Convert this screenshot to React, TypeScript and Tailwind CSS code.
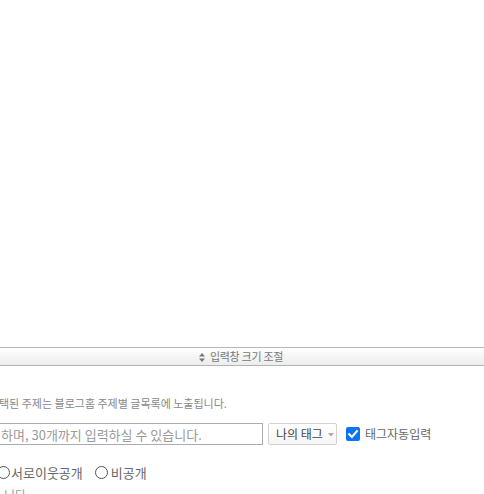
import React from "react";

const KR = { fontFamily: '"Noto Sans CJK KR", "Noto Sans", sans-serif' };

function Radio() {
  return <span className="inline-block w-[13px] h-[13px] rounded-full border border-[#555] bg-white shrink-0" />;
}

export default function App() {
  return (
    <div className="w-[484px] h-[494px] overflow-hidden bg-white relative" style={KR}>
      <div className="h-[347px]" />
      {/* resize bar */}
      <div className="h-[19px] border-t border-b border-t-[#b8b8b8] border-b-[#b3b3b3] bg-gradient-to-b from-white to-[#ececec] flex items-center justify-center gap-[5px] pr-[2px]">
        <svg width="6" height="9" viewBox="0 0 6 9" className="mt-[1px]">
          <path d="M3 0 L6 3.5 H0 Z" fill="#777" />
          <path d="M3 9 L6 5.5 H0 Z" fill="#777" />
        </svg>
        <span className="text-[11px] leading-none text-[#777] tracking-[-0.3px]">입력창 크기 조절</span>
      </div>
      {/* info text */}
      <div className="mt-[30px] h-[14px] flex items-center -ml-[1px]">
        <span className="text-[11px] leading-none text-[#888] whitespace-nowrap">택된 주제는 블로그홈 주제별 글목록에 노출됩니다.</span>
      </div>
      {/* tag row */}
      <div className="mt-[13px] flex items-center h-[22px]">
        <div className="w-[264px] -ml-[1px] h-[22px] border border-[#a8acb0] bg-white flex items-center pl-[1px]">
          <span className="text-[13px] leading-none text-[#999] whitespace-nowrap">하며, 30개까지 입력하실 수 있습니다.</span>
        </div>
        <div className="ml-[5px] w-[69px] h-[22px] border border-[#d2d2d2] rounded-[2px] bg-gradient-to-b from-white to-[#f6f6f6] flex items-center pl-[7px] gap-[5px]">
          <span className="text-[12px] leading-none text-[#444] whitespace-nowrap">나의 태그</span>
          <svg width="6" height="4" viewBox="0 0 6 4" className="mt-[1px]">
            <path d="M0 0 H6 L3 3.5 Z" fill="#aaa" />
          </svg>
        </div>
        <div className="ml-[9px] w-[14px] h-[14px] rounded-[2px] bg-[#0b74f5] flex items-center justify-center">
          <svg width="12" height="12" viewBox="0 0 12 12">
            <path d="M2.2 6.3 L4.9 9 L9.9 3.2" stroke="white" strokeWidth="2.1" fill="none" strokeLinecap="square" />
          </svg>
        </div>
        <span className="ml-[5px] text-[12px] leading-none text-[#666] whitespace-nowrap">태그자동입력</span>
      </div>
      {/* visibility row */}
      <div className="mt-[18px] h-[18px] flex items-center">
        <div className="-ml-[3px] flex items-center">
          <Radio />
          <span className="ml-[1px] text-[13px] leading-none text-[#666] whitespace-nowrap">서로이웃공개</span>
        </div>
        <div className="ml-[12px] flex items-center">
          <Radio />
          <span className="ml-[3px] text-[13px] leading-none text-[#666] whitespace-nowrap">비공개</span>
        </div>
      </div>
      <div className="mt-[8px] ml-[4px] text-[12px] leading-none text-[#999] whitespace-nowrap">니다</div>
    </div>
  );
}
